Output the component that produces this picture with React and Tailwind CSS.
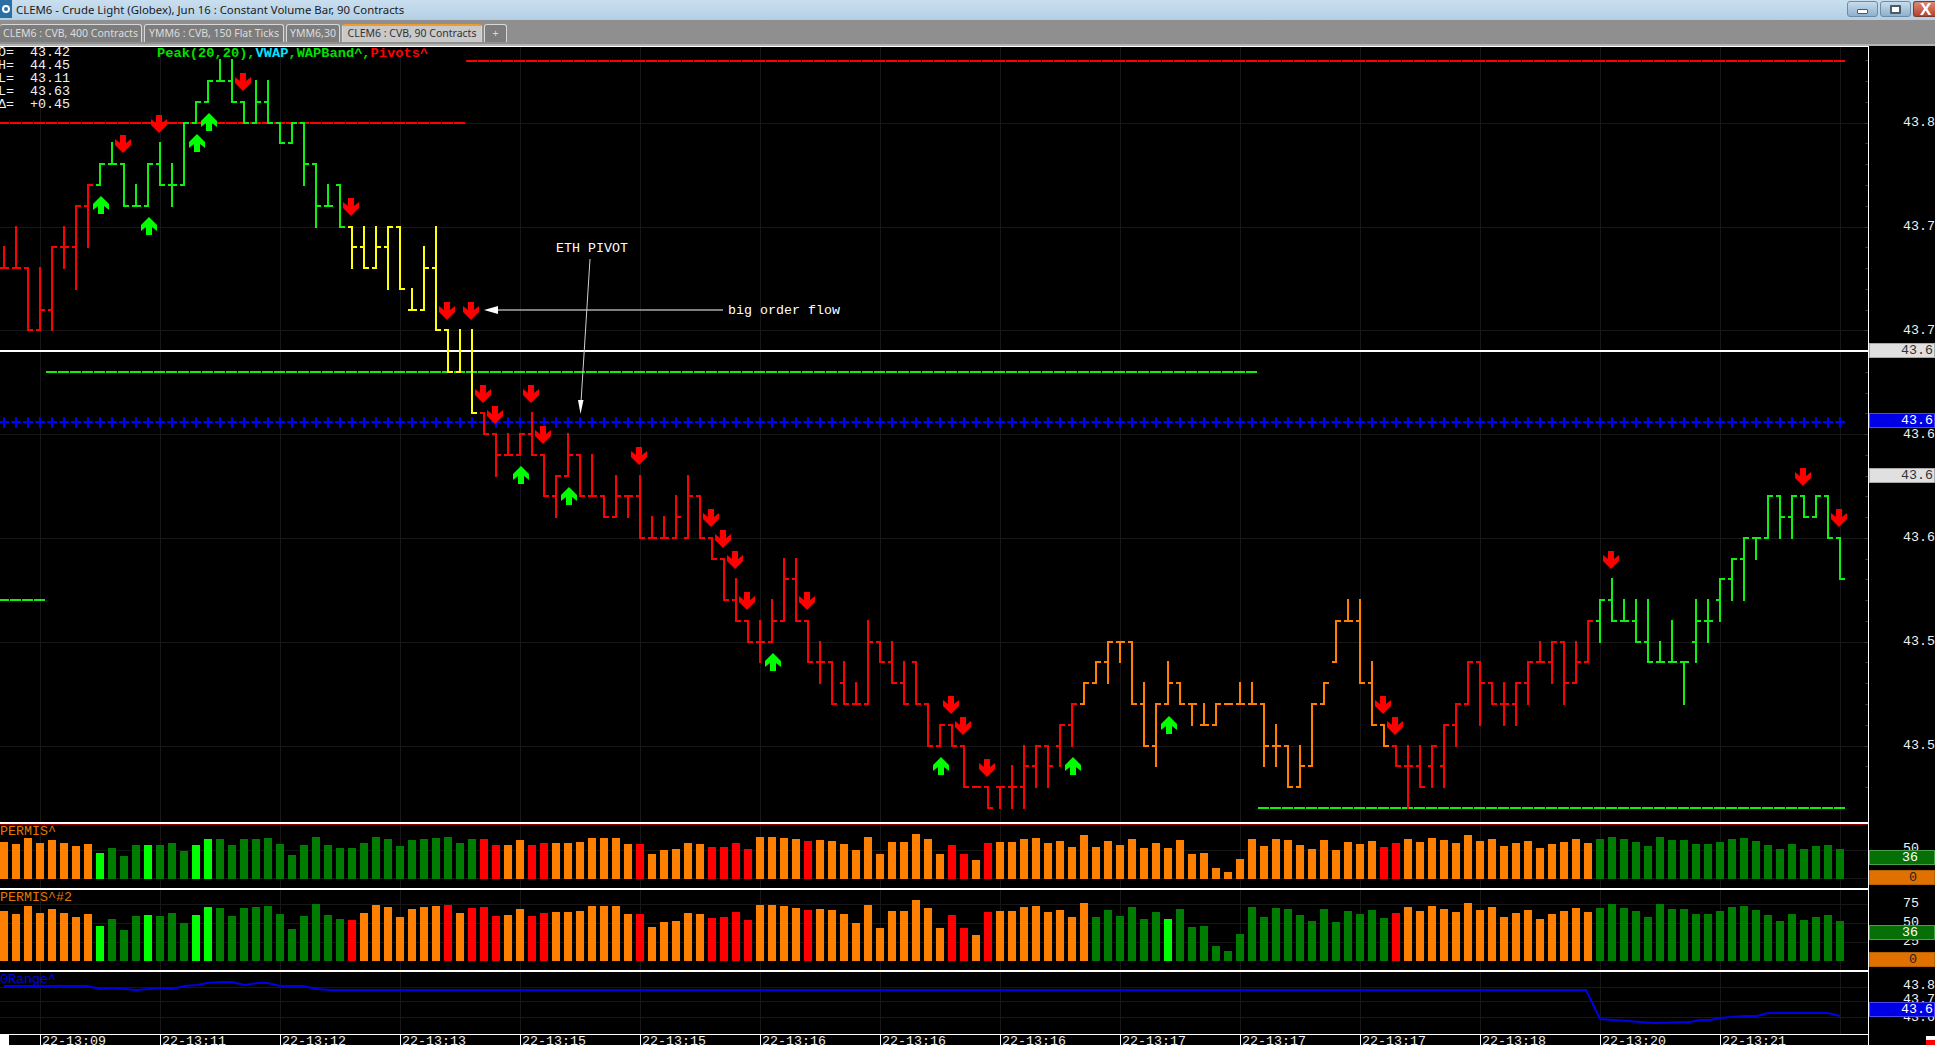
const RED = "#ff0000";
const GREEN = "#10f010";
const YELLOW = "#ffff00";
const ORANGE = "#ff8000";
const mono = "font-['Liberation_Mono',monospace] text-[13.33px]";

const Y = (n) => Math.round(122.7 + 20.76 * n);
const X = (i) => 4 + 12 * i;

// [high, low, open, close] in price steps from the first pivot line, null = no tick
const bars = [
  [6,7,7,7],[5,7,7,7],[7,10,7,10],[7,10,10,9],[6,10,9,6],[5,7,6,6],[4,8,6,4],[3,6,4,3],
  [2,3,3,2],[1,2,2,2],[2,4,2,4],[3,4,4,4],[2,4,4,2],[1,3,2,3],[2,4,3,3],[0,3,3,0],
  [-1,0,0,-1],[-2,-1,-1,-2],[-3,-2,-2,-2],[-3,-1,-2,-1],[-1,0,-1,0],[-2,0,0,-1],[-2,0,-1,0],[0,1,0,1],
  [0,1,1,0],[0,3,0,2],[2,5,2,4],[3,4,4,4],[3,5,3,5],[5,7,5,6],[5,7,6,7],[5,7,7,6],
  [5,8,6,5],[5,8,5,8],[8,9,9,9],[6,9,9,7],[5,10,7,10],[10,12,10,12],[10,12,12,null],[10,14,null,14],
  [14,15,14,15],[15,17,15,16],[15,16,16,16],[15,16,16,15],[14,16,15,16],[16,18,16,18],[17,19,18,17],[15,17,17,16],
  [16,18,16,18],[16,18,18,18],[18,19,18,19],[17,19,19,18],[18,19,18,18],[17,20,18,20],[19,20,20,20],[19,20,20,20],
  [18,20,20,19],[17,20,20,18],[18,20,18,20],[20,21,20,21],[21,23,21,23],[22,24,23,24],[24,25,24,25],[24,26,25,25],
  [23,25,25,24],[21,24,24,22],[21,24,22,24],[24,26,24,26],[25,27,26,26],[26,28,26,28],[26,28,27,28],[27,28,28,28],
  [24,28,28,25],[25,26,25,26],[25,27,26,27],[26,28,27,28],[26,28,26,28],[28,30,28,30],[29,30,30,29],[29,30,29,30],
  [30,32,30,32],[32,32,32,32],[32,33,32,33],[32,33,32,32],[31,33,32,32],[30,33,32,31],[30,32,31,30],[30,32,30,31],
  [29,31,30,29],[28,30,29,28],[27,28,28,27],[26,27,27,26],[25,27,26,25],[25,26,25,25],[25,28,25,28],[27,30,28,30],
  [28,31,30,28],[26,28,28,27],[27,28,27,28],[28,29,28,28],[28,29,29,29],[28,29,29,28],[28,28,28,28],[27,28,28,28],
  [27,28,28,28],[28,31,28,30],[29,31,30,30],[30,32,30,32],[30,32,32,31],[28,31,31,28],[27,28,28,27],[24,26,26,24],
  [23,24,24,24],[23,27,24,27],[26,29,27,29],[29,30,29,30],[30,31,30,31],[30,33,31,31],[30,32,31,32],[30,32,31,30],
  [29,32,31,29],[28,30,29,28],[26,28,28,26],[26,29,26,27],[27,28,27,28],[27,29,28,28],[27,29,28,27],[26,28,27,26],
  [25,26,26,26],[25,27,26,25],[25,28,25,27],[25,27,27,26],[24,26,26,24],[23,25,24,23],[22,24,23,24],[23,24,24,24],
  [23,25,24,25],[23,26,25,26],[25,26,26,26],[24,26,26,26],[26,28,26,26],[23,26,25,24],[23,25,24,24],[22,24,23,22],
  [21,23,22,21],[20,23,21,20],[20,21,20,20],[18,20,20,18],[18,20,18,19],[18,20,19,18],[18,19,18,19],[18,19,19,18],
  [18,20,18,20],[20,22,20,22],
];

const barColor = (i) => {
  if (i < 8) return RED;
  if (i < 29) return GREEN;
  if (i < 40) return YELLOW;
  if (i >= 133) return GREEN;
  if (i >= 90 && i < 116) return ORANGE;
  return RED;
};

const downArrows = [
  [123,135],[159,115],[243,73],[351,198],[447,302],[471,302],[483,385],[495,406],[531,385],[543,426],
  [639,447],[711,509],[723,530],[735,551],[747,592],[807,592],[951,696],[963,717],[987,759],[1383,696],
  [1395,717],[1611,551],[1803,468],[1839,509],
];
const upArrows = [
  [101,196],[149,217],[197,134],[209,113],[521,466],[569,487],[773,653],[941,757],[1073,757],[1169,716],
];

const heights1 = [
  37,35,41,36,39,36,33,35,26,31,23,34,34,34,36,28,34,40,40,34,40,40,41,35,24,34,42,34,31,31,36,42,40,33,39,40,41,42,36,40,40,
  34,34,39,34,36,36,36,37,41,41,41,35,35,25,29,30,36,35,32,32,36,30,42,42,41,40,38,39,38,35,29,42,25,37,37,45,40,25,34,25,19,36,37,37,40,41,36,38,32,44,32,38,34,40,31,36,31,39,
  25,26,11,7,20,40,33,40,39,34,30,39,29,37,35,38,32,36,40,37,41,39,36,44,38,40,33,36,38,31,35,37,40,36,
  40,42,40,37,33,42,39,39,35,35,37,40,41,38,34,30,35,30,33,34,30,
];
const heights2 = [
  50,47,55,48,52,48,44,47,35,42,31,45,46,45,48,38,46,54,53,45,53,54,55,47,32,45,57,46,42,41,48,56,54,44,52,54,55,56,48,53,54,
  45,46,52,45,48,49,49,50,55,55,55,47,47,34,39,40,48,47,43,44,49,41,56,56,55,53,51,52,51,47,38,56,33,50,50,61,53,33,46,33,26,49,50,50,54,55,49,51,44,58,44,51,45,54,42,49,42,52,
  34,35,15,10,27,54,44,53,52,46,40,52,39,50,47,51,43,48,54,50,55,52,49,58,51,54,44,48,51,42,47,50,53,49,
  53,57,53,50,44,57,52,52,47,47,50,54,55,51,46,40,47,41,44,46,40,
];

const red1 = [40,41,44,45,53,59,60,61,62,67,79,80,82,115,116];
const red2 = [29,37,39,40,41,44,45,53,59,60,61,62,67,79,80,82,116];
const bright = [8,12,16,17];

const color1 = (i) => {
  if (red1.includes(i)) return "#ff0000";
  if (bright.includes(i)) return "#00ff00";
  if ((i > 8 && i < 40) || i >= 133) return "#007d00";
  return ORANGE;
};
const color2 = (i) => {
  if (red2.includes(i)) return "#ff0000";
  if (bright.includes(i) || i === 97) return "#00ff00";
  if ((i > 8 && i < 29) || (i >= 91 && i < 116) || i >= 133) return "#007d00";
  return ORANGE;
};

const rangeLine =
  "4,986 88,986 100,989 112,988 137,990 160,988 172,989 185,986 197,985 207,983 220,982 232,982 245,985 257,983 268,983 280,986 303,986 317,989 330,990 1586,990 1600,1019 1654,1023 1690,1022 1700,1020 1710,1020 1720,1018 1743,1016 1757,1016 1768,1013 1828,1013 1840,1016";

const gridX = Array.from({ length: 16 }, (_, k) => 40 + 120 * k);
const timeLabels = ["09","11","12","13","15","15","16","16","16","17","17","17","18","20","21"];

function Bar({ bar, i }) {
  const [h, l, o, c] = bar;
  const x = X(i);
  const fill = barColor(i);
  return (
    <g fill={fill}>
      {h !== l && <rect x={x - 1} y={Y(h) - 1} width={2} height={Y(l) - Y(h) + 2} />}
      {o !== null && <rect x={x - 4} y={Y(o) - 1} width={4} height={2} />}
      {c !== null && <rect x={x} y={Y(c) - 1} width={5} height={2} />}
    </g>
  );
}

function DownArrow({ x, y }) {
  const p = [[-3,0],[3,0],[3,8],[8,4],[8,10],[0,18],[-8,10],[-8,4],[-3,8]];
  return <polygon fill="#ff0000" points={p.map(([a, b]) => `${x + a},${y + b}`).join(" ")} />;
}

function UpArrow({ x, y }) {
  const p = [[0,0],[8,8],[8,14],[3,10],[3,18],[-3,18],[-3,10],[-8,14],[-8,8]];
  return <polygon fill="#00ff00" points={p.map(([a, b]) => `${x + a},${y + b}`).join(" ")} />;
}

function Dashed({ from, to, y, color }) {
  return <line x1={from} x2={to} y1={y} y2={y} stroke={color} strokeWidth={2} strokeDasharray="11 1" shapeRendering="crispEdges" />;
}

function MainChart() {
  const gridLevels = [0, 5, 10, 15, 20, 25, 30];
  return (
    <svg width={1868} height={775} viewBox="0 47 1868 775" className="block">
      <g stroke="#171717" shapeRendering="crispEdges">
        {gridX.map((x) => <line key={x} x1={x} x2={x} y1={47} y2={822} />)}
        {gridLevels.map((n) => <line key={n} x1={0} x2={1868} y1={Y(n)} y2={Y(n)} />)}
      </g>
      <g stroke="#333" shapeRendering="crispEdges">
        {Array.from({ length: 36 }, (_, k) => Y(k - 3)).map((y) => <line key={y} x1={1865} x2={1868} y1={y} y2={y} />)}
      </g>
      <Dashed from={-2} to={465} y={123} color="#ff0000" />
      <Dashed from={466} to={1845} y={61} color="#ff0000" />
      <Dashed from={46} to={1257} y={372} color={GREEN} />
      <Dashed from={-2} to={45} y={600} color={GREEN} />
      <Dashed from={1258} to={1845} y={808} color={GREEN} />
      <rect x={0} y={350} width={1868} height={2} fill="#ffffff" />
      <g fill="#0000ff" shapeRendering="crispEdges">
        {bars.map((_, i) => (
          <g key={i}>
            <rect x={X(i) - 5} y={421} width={10} height={2} />
            <rect x={X(i) - 1} y={417} width={2} height={11} />
          </g>
        ))}
      </g>
      <g shapeRendering="crispEdges">
        {bars.map((b, i) => <Bar key={i} bar={b} i={i} />)}
      </g>
      {downArrows.map(([x, y]) => <DownArrow key={`${x}-${y}`} x={x} y={y} />)}
      {upArrows.map(([x, y]) => <UpArrow key={`${x}-${y}`} x={x} y={y} />)}
      <line x1={723} x2={495} y1={310} y2={310} stroke="#a8a8a8" strokeWidth={1.5} />
      <polygon points="484,310 498,306 498,314" fill="#ffffff" />
      <line x1={590} x2={581} y1={259} y2={402} stroke="#d0d0d0" strokeWidth={1} />
      <polygon points="580.5,414 578,400 583.5,400" fill="#ffffff" />
    </svg>
  );
}

function PanelGrid({ top, height, rows, children }) {
  return (
    <svg width={1868} height={height} viewBox={`0 ${top} 1868 ${height}`} className="absolute inset-0">
      <g stroke="#171717" shapeRendering="crispEdges">
        {gridX.map((x) => <line key={x} x1={x} x2={x} y1={top} y2={top + height} />)}
        {rows.map((y) => <line key={y} x1={0} x2={1868} y1={y} y2={y} />)}
      </g>
      {children}
    </svg>
  );
}

function VolumePanel({ label, heights, color, top, height, rows, redEdge }) {
  return (
    <div className="relative border-t-2 border-white" style={{ height: height + 2 }}>
      <PanelGrid top={top} height={height} rows={rows} />
      {redEdge && <div className="absolute inset-x-0 top-0 h-px bg-[#8a0000]" />}
      <div className="relative flex h-full items-end gap-1 pb-[9px]">
        {heights.map((h, i) => (
          <div key={i} className="w-2 shrink-0" style={{ height: h, backgroundColor: color(i) }} />
        ))}
      </div>
      <span className={`absolute left-0 top-px leading-[14px] text-[#e07800] ${mono}`}>{label}</span>
    </div>
  );
}

function AxisLabel({ cy, pr = 0, children }) {
  return (
    <span
      className={`absolute inset-x-0 h-[15px] text-right leading-[15px] text-[#f0f0f0] ${mono}`}
      style={{ top: cy - 46 - 7, paddingRight: pr }}
    >
      {children}
    </span>
  );
}

function AxisBox({ top, pr = 1, className, children }) {
  return (
    <span
      className={`absolute inset-x-0 h-[15px] border text-right leading-[14px] ${mono} ${className}`}
      style={{ top: top - 46, paddingRight: pr }}
    >
      {children}
    </span>
  );
}

const grayBox = "border-[#a8a8a8] bg-[#e0e0e0] text-[#333333]";
const blueBox = "border-[#4a4af0] bg-[#0000e6] text-white";
const greenBox = "border-[#4aa04a] bg-[#067006] text-white";
const orangeBox = "border-[#b86000] bg-[#e07000] text-[#222222]";

function PriceAxis() {
  return (
    <div className="relative flex-1 overflow-hidden">
      <AxisLabel cy={122}>43.8</AxisLabel>
      <AxisLabel cy={226}>43.7</AxisLabel>
      <AxisLabel cy={330}>43.7</AxisLabel>
      <AxisLabel cy={434}>43.6</AxisLabel>
      <AxisLabel cy={537}>43.6</AxisLabel>
      <AxisLabel cy={641}>43.5</AxisLabel>
      <AxisLabel cy={745}>43.5</AxisLabel>
      <AxisBox top={343} className={grayBox}>43.6</AxisBox>
      <AxisBox top={413} className={blueBox}>43.6</AxisBox>
      <AxisBox top={468} className={grayBox}>43.6</AxisBox>

      <AxisLabel cy={848} pr={16}>50</AxisLabel>
      <AxisBox top={850} pr={16} className={greenBox}>36</AxisBox>
      <AxisBox top={870} pr={17} className={orangeBox}>0</AxisBox>

      <AxisLabel cy={903} pr={16}>75</AxisLabel>
      <AxisLabel cy={922} pr={16}>50</AxisLabel>
      <AxisLabel cy={941} pr={16}>25</AxisLabel>
      <AxisBox top={925} pr={16} className={greenBox}>36</AxisBox>
      <AxisBox top={952} pr={17} className={orangeBox}>0</AxisBox>

      <AxisLabel cy={985}>43.8</AxisLabel>
      <AxisLabel cy={999}>43.7</AxisLabel>
      <AxisLabel cy={1017}>43.6</AxisLabel>
      <AxisBox top={1002} className={blueBox}>43.6</AxisBox>

      <div className="absolute bottom-0 right-0 flex h-[9px] w-[9px] flex-col">
        <div className="h-1 bg-white" />
        <div className="flex-1 bg-[#ff0000]" />
      </div>
    </div>
  );
}

function TimeAxis() {
  return (
    <div className="relative flex h-[11px] overflow-hidden border-t border-white pl-10">
      <div className="absolute left-0 top-0 h-full w-[9px] bg-white" />
      {timeLabels.map((t, i) => (
        <div key={i} className={`w-[120px] shrink-0 border-l border-white pl-px leading-[14px] text-[#f0f0f0] ${mono}`}>
          {`22-13:${t}`}
        </div>
      ))}
    </div>
  );
}

function WindowButton({ className, children }) {
  return (
    <div className={`flex h-4 items-center justify-center rounded-[3px] border ${className}`}>{children}</div>
  );
}

function TitleBar() {
  return (
    <div className="flex h-5 items-start bg-linear-to-b from-[#c9dff0] to-[#b4cfe5]">
      <div className="flex h-[18px] w-3 items-center justify-center bg-[#2a6ea6]">
        <div className="h-2 w-2 rounded-full border-2 border-white" />
      </div>
      <span className="ml-1 whitespace-nowrap text-[11.4px] leading-[19px] text-[#1a1a1a] font-['Noto_Sans',sans-serif]">
        CLEM6 - Crude Light (Globex), Jun 16 : Constant Volume Bar, 90 Contracts
      </span>
      <div className="ml-auto mt-px flex gap-0.5">
        <WindowButton className="w-[31px] border-[#6f8ba3] bg-linear-to-b from-[#c8dcec] to-[#8fb0cb]">
          <div className="mt-1 h-[5px] w-[11px] rounded-[1px] border border-[#4a5a68] bg-white" />
        </WindowButton>
        <WindowButton className="w-[31px] border-[#6f8ba3] bg-linear-to-b from-[#c8dcec] to-[#8fb0cb]">
          <div className="h-[9px] w-[11px] rounded-[1px] border-2 border-[#4a5a68] bg-white" />
        </WindowButton>
        <WindowButton className="w-[22px] justify-start rounded-r-none border-r-0 border-[#7a3a30] bg-linear-to-b from-[#d98a78] to-[#b8402c]">
          <span className="pl-1.5 text-[17px] font-bold leading-none text-white font-['Liberation_Sans',sans-serif]">X</span>
        </WindowButton>
      </div>
    </div>
  );
}

function Tab({ active, className, children }) {
  const look = active
    ? "border-t-2 border-t-[#f09a30] bg-[#c9c9c9] text-[#333333]"
    : "bg-[#7d7d7d] text-[#dcdcdc]";
  return (
    <div className={`flex h-[18px] items-center justify-center whitespace-nowrap rounded-t-[3px] border-l border-r border-t border-[#d8d8d8] text-[10.5px] font-['Noto_Sans',sans-serif] ${look} ${className}`}>
      {children}
    </div>
  );
}

function TabBar() {
  return (
    <div className="h-[26px] bg-[#8f8f8f]">
      <div className="flex h-[22px] items-end gap-0.5">
        <Tab className="w-[142px] border-l-0">CLEM6 : CVB, 400 Contracts</Tab>
        <Tab className="w-[140px]">YMM6 : CVB, 150 Flat Ticks</Tab>
        <Tab className="w-[54px]">YMM6,30</Tab>
        <Tab active className="w-[140px]">CLEM6 : CVB, 90 Contracts</Tab>
        <Tab className="w-[23px]">+</Tab>
      </div>
      <div className="mt-0.5 h-0.5 bg-[#b4b4b4]" />
    </div>
  );
}

export default function App() {
  return (
    <div className="flex h-[1045px] w-[1935px] flex-col overflow-hidden bg-black">
      <TitleBar />
      <TabBar />
      <div className="flex flex-1">
        <div className="flex w-[1869px] flex-col border-r border-t border-white">
          <div className="relative h-[775px]">
            <MainChart />
            <div className={`absolute left-[-2px] top-[-1px] whitespace-pre leading-[13px] text-[#f0f0f0] ${mono}`}>
              <div>O=  43.42</div>
              <div>H=  44.45</div>
              <div>L=  43.11</div>
              <div>L=  43.63</div>
              <div>Δ=  +0.45</div>
            </div>
            <div className="absolute left-[157px] top-[-1px] whitespace-pre text-[13.7px] font-bold leading-[15px] text-[#00e000] font-['Liberation_Mono',monospace]">
              Peak(20,20),<span className="text-[#00e5ff]">VWAP</span>,WAPBand^,<span className="text-[#ff0000]">Pivots^</span>
            </div>
            <span className={`absolute left-[556px] top-[194px] leading-[15px] text-white ${mono}`}>ETH PIVOT</span>
            <span className={`absolute left-[728px] top-[256px] leading-[15px] text-white ${mono}`}>big order flow</span>
          </div>
          <VolumePanel label="PERMIS^" heights={heights1} color={color1} top={824} height={64} rows={[850, 878]} redEdge />
          <VolumePanel label="PERMIS^#2" heights={heights2} color={color2} top={890} height={80} rows={[904, 923, 942]} />
          <div className="relative h-[64px] border-t-2 border-white">
            <PanelGrid top={972} height={62} rows={[987, 1001, 1017]}>
              <polyline points={rangeLine} fill="none" stroke="#0000e6" strokeWidth={2} />
            </PanelGrid>
            <span className={`absolute left-0 top-px leading-[14px] text-[#0000e6] ${mono}`}>0Range^</span>
          </div>
          <TimeAxis />
        </div>
        <PriceAxis />
      </div>
    </div>
  );
}
